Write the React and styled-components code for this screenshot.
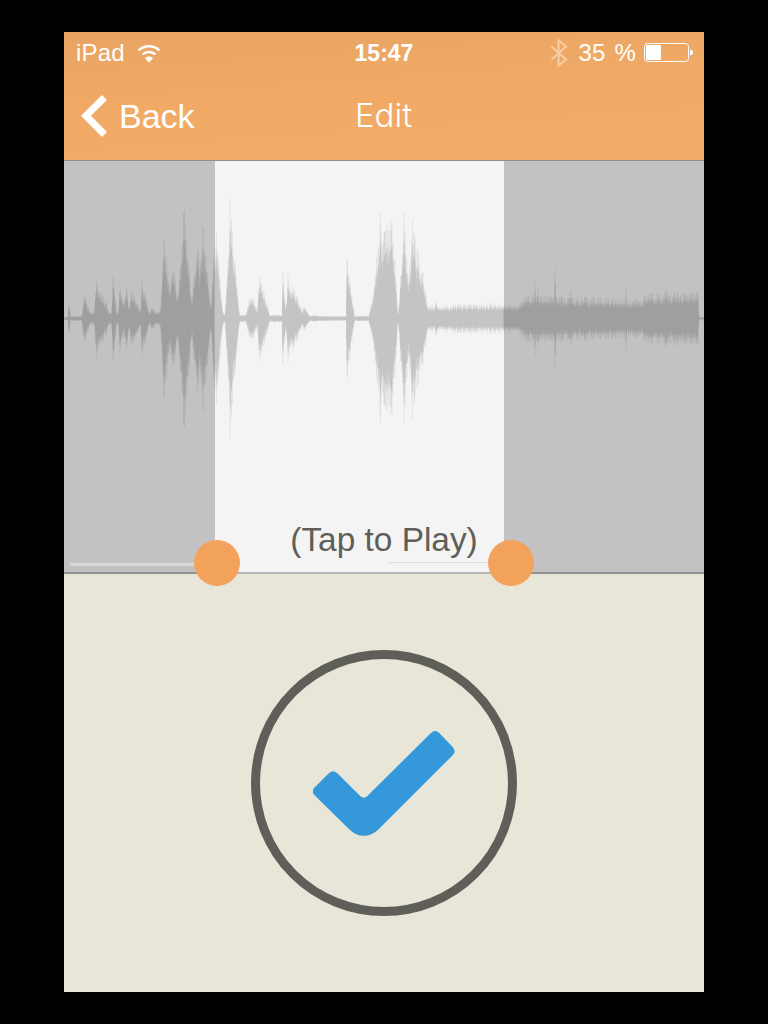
import React from "react";
import styled, { createGlobalStyle } from "styled-components";

const GlobalStyle = createGlobalStyle`
  html, body {
    margin: 0;
    background: #000;
  }
`;

const Frame = styled.div`
  width: 640px;
  height: 960px;
  margin: 32px auto 0;
  display: flex;
  flex-direction: column;
  font-family: "Liberation Sans", Arial, sans-serif;
`;

const Header = styled.header`
  height: 128px;
  flex: none;
  color: #fff;
  background: linear-gradient(176deg, #e9a463 0%, #f0aa66 45%, #f3ad69 100%);
  border-bottom: 1px solid #8f8f8f;
`;

const StatusBar = styled.div`
  height: 42px;
  padding: 0 10px 0 12px;
  display: grid;
  grid-template-columns: 1fr auto 1fr;
  align-items: center;
  font-size: 24px;
`;

const StatusGroup = styled.div`
  display: flex;
  align-items: center;
  gap: ${p => p.$gap || 12}px;
  justify-content: ${p => (p.$end ? "flex-end" : "flex-start")};
`;

const Carrier = styled.span`
  letter-spacing: 0.2px;
`;

const Percent = styled.span`
  margin-left: 2px;
  word-spacing: 2px;
  letter-spacing: 0.2px;
`;

const Time = styled.span`
  font-size: 23px;
  font-weight: 700;
  transform: translateX(-1px);
`;

const NavBar = styled.nav`
  height: 84px;
  padding-left: 17px;
  box-sizing: border-box;
  display: grid;
  grid-template-columns: 1fr auto 1fr;
  align-items: center;
`;

const BackLink = styled.div`
  display: flex;
  align-items: center;
  gap: 12px;
  font-size: 34px;
`;

const Title = styled.span`
  font-family: "Inter", "Liberation Sans", sans-serif;
  font-weight: 300;
  font-size: 33px;
  transform: translate(-9px, -1px);
`;

const WavePanel = styled.section`
  position: relative;
  height: 413px;
  flex: none;
  display: flex;
  overflow: visible;
`;

const Region = styled.div`
  width: ${p => p.$width}px;
  flex: none;
  background: ${p => (p.$selected ? "#f4f4f4" : "#c2c2c2")};
  box-shadow: inset 0 -2px rgba(0, 0, 0, 0.25);
`;

const WaveSvg = styled.svg`
  position: absolute;
  left: 0;
  top: 0;
`;

const TapLabel = styled.div`
  position: absolute;
  left: 0;
  right: 0;
  top: 359px;
  text-align: center;
  font-size: 33.4px;
  line-height: 40px;
  color: #5f5e58;
`;

const Track = styled.div`
  position: absolute;
  top: 401px;
  height: 4px;
  left: ${p => p.$left}px;
  width: ${p => p.$width}px;
  border-radius: 2px;
  background: ${p => p.$color};
  box-shadow: inset 0 1px rgba(0, 0, 0, 0.08);
`;

const Handle = styled.div`
  position: absolute;
  top: 379px;
  left: ${p => p.$left}px;
  width: 46px;
  height: 46px;
  border-radius: 50%;
  background: #f3a25c;
`;

const ConfirmPanel = styled.section`
  flex: 1;
  background: #e7e6d8;
  display: flex;
  align-items: center;
  justify-content: center;
`;

const ConfirmRing = styled.div`
  width: 266px;
  height: 266px;
  box-sizing: border-box;
  border: 9px solid #5f5e58;
  border-radius: 50%;
  display: flex;
  align-items: center;
  justify-content: center;
`;

// x, height, rise width, fall width
const SPIKES = [
  [69, 22, 1, 1.5], [84, 28, 2, 8], [96, 42, 2, 16], [106, 22, 1, 3], [113, 52, 1.5, 4],
  [120, 40, 2, 6], [126, 34, 4, 6], [132, 32, 4, 12], [142, 42, 2, 9], [152, 14, 3, 6],
  [164, 86, 4, 9], [173, 64, 6, 7], [184, 118, 8, 10], [197, 92, 6, 7], [203, 102, 7, 9],
  [216, 104, 6, 7], [222, 12, 1, 3], [230, 122, 5, 10], [251, 27, 6, 9], [259, 50, 2, 12],
  [283, 60, 1, 3], [288, 50, 2, 8], [291, 38, 9, 15], [304, 14, 3, 8], [347, 64, 1, 8],
  [381, 112, 11, 14], [387, 114, 14, 10], [392, 122, 24, 6], [404, 108, 6, 8], [412, 110, 5, 18],
  [421, 62, 2, 9], [436, 20, 4, 7], [535, 42, 1, 1.5], [538, 37, 1, 1.5], [555, 52, 1, 1.5],
  [561, 42, 1, 1.5], [570, 34, 3, 5], [626, 34, 1, 1.5], [648, 28, 3, 10], [666, 32, 7, 9],
  [677, 30, 6, 8], [693, 28, 7, 7],
];

const BASE = [
  [64, 1], [68, 2], [84, 3], [92, 7], [160, 7], [240, 4], [300, 4], [330, 2.5], [370, 3],
  [430, 14], [505, 16], [518, 13], [525, 24], [640, 20], [650, 27], [698, 27], [699, 1], [704, 1],
];

const baseAt = x => {
  for (let i = 1; i < BASE.length; i++) {
    if (x <= BASE[i][0]) {
      const [x0, y0] = BASE[i - 1];
      const [x1, y1] = BASE[i];
      return y0 + ((y1 - y0) * (x - x0)) / (x1 - x0);
    }
  }
  return 1;
};

const envelopeAt = x => {
  let h = baseAt(x);
  SPIKES.forEach(([sx, sh, rise, fall]) => {
    const d = x - sx;
    const t = 1 - Math.abs(d) / (d < 0 ? rise : fall);
    if (t > 0) h = Math.max(h, sh * Math.pow(t, 1.05));
  });
  return h;
};

const noise = i => {
  const v = Math.sin(i * 12.9898) * 43758.5453;
  return v - Math.floor(v);
};

// builds one vertical bar per half pixel, page x coords shifted into the panel
const wavePath = (from, to, scale, jitter) => {
  let d = "";
  for (let x = from; x < to; x += 0.5) {
    const h = envelopeAt(x) * scale * (1 - jitter + jitter * noise(x * 2 + 1));
    const top = 157.5 - Math.max(h, 0.9);
    const bottom = 157.5 + Math.max(h, 0.9);
    d += `M${x - 64} ${top.toFixed(1)}V${bottom.toFixed(1)}`;
  }
  return d;
};

const WAVE_PARTS = [
  { from: 64, to: 215, color: "#9e9c9a" },
  { from: 215, to: 504, color: "#c1c0be" },
  { from: 504, to: 704, color: "#9e9c9a" },
];

const Waveform = () => (
  <WaveSvg width="640" height="400" viewBox="0 0 640 400" fill="none">
    {WAVE_PARTS.map(part => (
      <g key={part.from} stroke={part.color} strokeWidth="0.6">
        <path d={wavePath(part.from, part.to, 1, 0.42)} opacity="0.5" />
        <path d={wavePath(part.from, part.to, 0.72, 0.34)} />
      </g>
    ))}
  </WaveSvg>
);

const WifiIcon = () => (
  <svg width="24" height="20" viewBox="0 0 24 20" fill="none">
    <path d="M1.5 7.5C7.5 1.8 16.5 1.8 22.5 7.5" stroke="#fff" strokeWidth="2.4" />
    <path d="M5.5 11.5C9 8.2 15 8.2 18.5 11.5" stroke="#fff" strokeWidth="2.4" />
    <path d="M8 15.2L12 19.4L16 15.2C13.6 13 10.4 13 8 15.2Z" fill="#fff" />
  </svg>
);

const BluetoothIcon = () => (
  <svg width="18" height="28" viewBox="0 0 18 28" fill="none" opacity="0.42">
    <path d="M1.5 7.5L16 20.5L8.5 26.5V1.5L16 7.5L1.5 20.5" stroke="#fff" strokeWidth="2.2" />
  </svg>
);

const BatteryIcon = () => (
  <svg width="50" height="20" viewBox="0 0 50 20" fill="none">
    <rect x="0.5" y="0.5" width="44" height="18" rx="3" stroke="#fff" />
    <rect x="2" y="2" width="15" height="15" rx="1" fill="#fff" />
    <path d="M46 6.5C48 6.8 49 8 49 9.5C49 11 48 12.2 46 12.5Z" fill="#fff" />
  </svg>
);

const BackChevron = () => (
  <svg width="26" height="42" viewBox="0 0 26 42" fill="none">
    <path d="M23.5 2.5L5 20.8L23.5 39.5" stroke="#fff" strokeWidth="7" />
  </svg>
);

const CheckMark = () => (
  <svg width="142" height="106" viewBox="0 0 425 316">
    <path
      fill="#3498db"
      d="M4 172L48 128Q60 118 72 128L142 198Q152 206 162 198L353 8Q365 -4 378 8L418 50Q430 63 418 75L195 298Q176 316 152 316Q128 316 110 298L4 194Q-6 183 4 172Z"
    />
  </svg>
);

const App = () => (
  <Frame>
    <GlobalStyle />
    <Header>
      <StatusBar>
        <StatusGroup>
          <Carrier>iPad</Carrier>
          <WifiIcon />
        </StatusGroup>
        <Time>15:47</Time>
        <StatusGroup $end $gap={8}>
          <BluetoothIcon />
          <Percent>35 %</Percent>
          <BatteryIcon />
        </StatusGroup>
      </StatusBar>
      <NavBar>
        <BackLink>
          <BackChevron />
          <span>Back</span>
        </BackLink>
        <Title>Edit</Title>
      </NavBar>
    </Header>
    <WavePanel>
      <Region $width={151} />
      <Region $width={289} $selected />
      <Region $width={200} />
      <Waveform />
      <TapLabel>(Tap to Play)</TapLabel>
      <Track $left={5} $width={130} $color="#d8d8d8" />
      <Track $left={324} $width={105} $color="#f2f2f2" />
      <Handle $left={130} />
      <Handle $left={424} />
    </WavePanel>
    <ConfirmPanel>
      <ConfirmRing>
        <CheckMark />
      </ConfirmRing>
    </ConfirmPanel>
  </Frame>
);

export default App;
